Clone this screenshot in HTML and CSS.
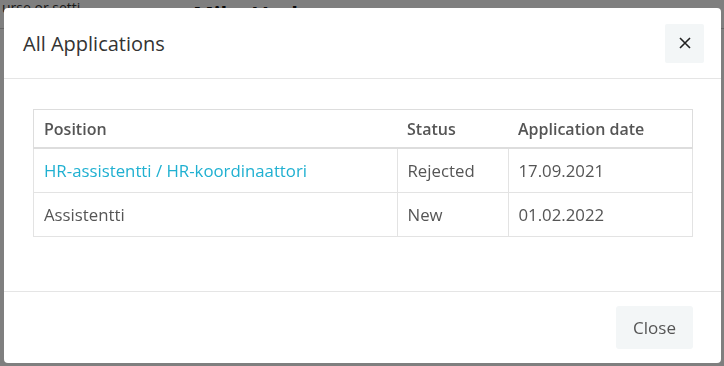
FILE: index.html
```html
<!DOCTYPE html>
<html lang="en">
<head>
  <meta charset="UTF-8">
  <meta name="viewport" content="width=device-width, initial-scale=1.0">
  <title>All Applications</title>
  <link rel="stylesheet" href="styles.css">
</head>
<body>
  <div class="page">
    <div class="page-top">
      <span class="page-search">urse or setti</span>
      <span class="page-name">Mika Vesk</span>
    </div>
    <div class="page-line"></div>
  </div>

  <div class="backdrop"></div>

  <div class="modal">
    <div class="modal-header">
      <h2>All Applications</h2>
      <button class="btn-x" aria-label="Close">
        <svg width="12" height="12" viewBox="0 0 12 12"><path d="M1 1 L11 11 M11 1 L1 11" stroke="#222" stroke-width="1.6" fill="none"/></svg>
      </button>
    </div>

    <div class="modal-body">
      <table class="apps-table">
        <thead>
          <tr>
            <th class="col-pos">Position</th>
            <th class="col-status">Status</th>
            <th>Application date</th>
          </tr>
        </thead>
        <tbody>
          <tr>
            <td><a href="#">HR-assistentti / HR-koordinaattori</a></td>
            <td>Rejected</td>
            <td>17.09.2021</td>
          </tr>
          <tr>
            <td>Assistentti</td>
            <td>New</td>
            <td>01.02.2022</td>
          </tr>
        </tbody>
      </table>
    </div>

    <div class="modal-footer">
      <button class="btn-close">Close</button>
    </div>
  </div>
</body>
</html>
```

FILE: styles.css
```css
body {
  margin: 0;
  font-family: "Open Sans", Arial, sans-serif;
  color: #555;
  background: #fff;
  height: 366px;
  overflow: hidden;
}
.page-top {
  display: flex;
  align-items: flex-start;
  height: 28px;
}
.page-search {
  font-size: 14px;
  line-height: 16px;
  color: #333;
  margin-left: 2px;
  width: 191px;
}
.page-name {
  font-size: 22px;
  line-height: 26px;
  font-weight: 700;
  color: #111;
}
.page-line {
  border-top: 1px solid #ccc;
}
.backdrop {
  position: fixed;
  inset: 0;
  background: rgba(0, 0, 0, 0.5);
}
.modal {
  position: absolute;
  left: 4px;
  top: 8px;
  width: 717px;
  height: 355px;
  background: #fff;
  border-radius: 4px;
  display: flex;
  flex-direction: column;
}
.modal-header {
  display: flex;
  align-items: center;
  justify-content: space-between;
  height: 70px;
  padding: 0 17px 0 19px;
  border-bottom: 1px solid #e5e5e5;
}
.modal-header h2 {
  margin: 0;
  font-size: 20px;
  font-weight: 400;
  color: #333;
}
.btn-x {
  width: 39px;
  height: 39px;
  border: none;
  border-radius: 2px;
  background: #f3f6f7;
  display: flex;
  align-items: center;
  justify-content: center;
  padding: 0;
}
.modal-body {
  flex: 1;
  padding: 30px 28px 0 29px;
}
.apps-table {
  width: 100%;
  border-collapse: collapse;
  border: 1px solid #ddd;
  font-size: 16.8px;
}
.apps-table th {
  text-align: left;
  font-size: 16px;
  font-weight: 600;
  color: #555;
  height: 37px;
  padding: 0 10px;
  border-bottom: 2px solid #ddd;
}
.apps-table td {
  padding: 0 10px;
  height: 43px;
  border: 1px solid #e3e3e3;
  color: #555;
}
.apps-table .col-pos {
  width: 343px;
}
.apps-table .col-status {
  width: 91px;
}
.apps-table a {
  color: #1fb0d1;
  text-decoration: none;
}
.modal-footer {
  height: 72px;
  border-top: 1px solid #e5e5e5;
  display: flex;
  justify-content: flex-end;
  align-items: flex-start;
  padding: 14px 28px 0 0;
  box-sizing: border-box;
}
.btn-close {
  width: 77px;
  height: 43px;
  border: none;
  border-radius: 3px;
  background: #f3f6f7;
  font-family: "Open Sans", Arial, sans-serif;
  font-size: 17px;
  color: #555;
}
```
